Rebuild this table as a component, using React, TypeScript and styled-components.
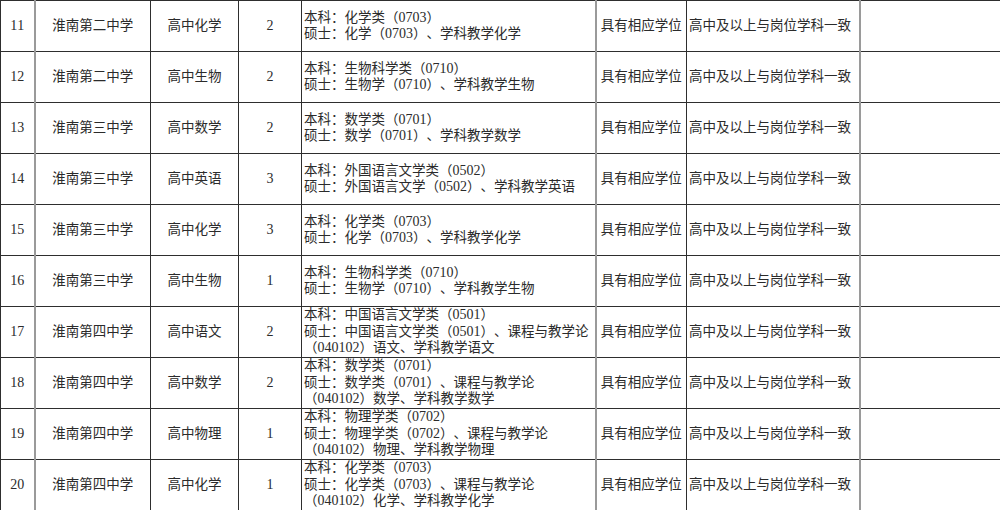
import styled, { createGlobalStyle } from "styled-components";

const GlobalStyle = createGlobalStyle`
  html, body {
    margin: 0;
    padding: 0;
    background: #fff;
  }
  body {
    font-family: "Liberation Serif", "Noto Sans CJK SC", serif;
    color: #2b2b2b;
    text-spacing-trim: space-all;
    font-kerning: none;
  }
`;

const Table = styled.table`
  width: 1000px;
  border-collapse: collapse;
  table-layout: fixed;
  font-size: 13.5px;
`;

const Row = styled.tr`
  height: 51px;
`;

const Cell = styled.td<{ $align?: "left" | "center"; $soft?: boolean }>`
  border: 1px solid #2e2e2e;
  ${({ $soft }) => ($soft ? "border-left: 2px solid #9a9a9a;" : "")}
  padding: 0 2px;
  text-align: ${({ $align }) => $align ?? "center"};
  vertical-align: middle;
  line-height: 16.5px;
  white-space: nowrap;
  overflow: hidden;
`;

const Num = styled.span`
  font-size: 14px;
`;

const Line = styled.div`
  display: block;
  height: 16.5px;
`;

type Post = {
  no: number;
  school: string;
  subject: string;
  count: number;
  major: string[];
};

const posts: Post[] = [
  { no: 11, school: "淮南第二中学", subject: "高中化学", count: 2, major: ["本科：化学类（0703）", "硕士：化学（0703）、学科教学化学"] },
  { no: 12, school: "淮南第二中学", subject: "高中生物", count: 2, major: ["本科：生物科学类（0710）", "硕士：生物学（0710）、学科教学生物"] },
  { no: 13, school: "淮南第三中学", subject: "高中数学", count: 2, major: ["本科：数学类（0701）", "硕士：数学（0701）、学科教学数学"] },
  { no: 14, school: "淮南第三中学", subject: "高中英语", count: 3, major: ["本科：外国语言文学类（0502）", "硕士：外国语言文学（0502）、学科教学英语"] },
  { no: 15, school: "淮南第三中学", subject: "高中化学", count: 3, major: ["本科：化学类（0703）", "硕士：化学（0703）、学科教学化学"] },
  { no: 16, school: "淮南第三中学", subject: "高中生物", count: 1, major: ["本科：生物科学类（0710）", "硕士：生物学（0710）、学科教学生物"] },
  { no: 17, school: "淮南第四中学", subject: "高中语文", count: 2, major: ["本科：中国语言文学类（0501）", "硕士：中国语言文学类（0501）、课程与教学论", "（040102）语文、学科教学语文"] },
  { no: 18, school: "淮南第四中学", subject: "高中数学", count: 2, major: ["本科：数学类（0701）", "硕士：数学类（0701）、课程与教学论", "（040102）数学、学科教学数学"] },
  { no: 19, school: "淮南第四中学", subject: "高中物理", count: 1, major: ["本科：物理学类（0702）", "硕士：物理学类（0702）、课程与教学论", "（040102）物理、学科教学物理"] },
  { no: 20, school: "淮南第四中学", subject: "高中化学", count: 1, major: ["本科：化学类（0703）", "硕士：化学类（0703）、课程与教学论", "（040102）化学、学科教学化学"] },
];

const widths = [34, 116, 88, 63, 294, 91, 173, 141];

function withDigits(text: string) {
  return text.split(/(\d+)/).map((part, i) =>
    i % 2 === 1 ? <Num key={i}>{part}</Num> : part
  );
}

export default function App() {
  return (
    <>
      <GlobalStyle />
      <Table>
        <colgroup>
          {widths.map((w, i) => (
            <col key={i} style={{ width: w }} />
          ))}
        </colgroup>
        <tbody>
          {posts.map((p) => (
            <Row key={p.no}>
              <Cell>
                <Num>{p.no}</Num>
              </Cell>
              <Cell $soft>{p.school}</Cell>
              <Cell>{p.subject}</Cell>
              <Cell>
                <Num>{p.count}</Num>
              </Cell>
              <Cell $align="left">
                {p.major.map((m) => (
                  <Line key={m}>{withDigits(m)}</Line>
                ))}
              </Cell>
              <Cell $soft>具有相应学位</Cell>
              <Cell $align="left">高中及以上与岗位学科一致</Cell>
              <Cell $soft></Cell>
            </Row>
          ))}
        </tbody>
      </Table>
    </>
  );
}
